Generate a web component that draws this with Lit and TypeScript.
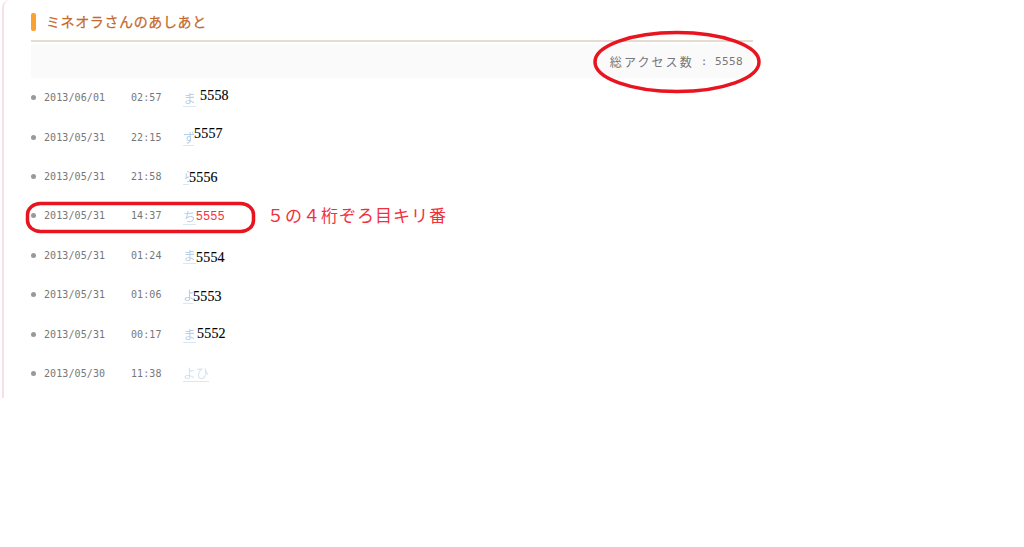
import { LitElement, html, css, svg } from "lit";
import { customElement } from "lit/decorators.js";

interface Row { date: string; time: string; kana: string; num: string; clip: number; gap: number; dy: number; hit?: boolean; faded?: boolean; }

const rows: Row[] = [
  { date: "2013/06/01", time: "02:57", kana: "ま", num: "5558", clip: 13, gap: 4, dy: -2 },
  { date: "2013/05/31", time: "22:15", kana: "ず", num: "5557", clip: 11, gap: 0, dy: -3 },
  { date: "2013/05/31", time: "21:58", kana: "ら", num: "5556", clip: 6, gap: 0, dy: 2 },
  { date: "2013/05/31", time: "14:37", kana: "ち", num: "5555", clip: 13, gap: 0, dy: 0, hit: true },
  { date: "2013/05/31", time: "01:24", kana: "ま", num: "5554", clip: 13, gap: 0, dy: 3 },
  { date: "2013/05/31", time: "01:06", kana: "よ", num: "5553", clip: 10, gap: 0, dy: 2 },
  { date: "2013/05/31", time: "00:17", kana: "ま", num: "5552", clip: 13, gap: 1, dy: 0 },
  { date: "2013/05/30", time: "11:38", kana: "よひ", num: "", clip: 26, gap: 0, dy: 0, faded: true },
];

@customElement("app-root")
export class AppRoot extends LitElement {
  static styles = css`
    :host { display: block; position: relative; height: 547px; background: #fff; overflow: hidden; }
    .panel {
      box-sizing: border-box; margin-left: 2px; width: 751px; height: 398px;
      border-left: 2px solid #f6dfe6; border-top-left-radius: 8px;
      padding: 13px 0 0 27px;
      display: flex; flex-direction: column;
    }
    .head { display: flex; align-items: center; gap: 10px; height: 18px; }
    .mark { width: 5px; height: 18px; border-radius: 2px; background: #fca02f; }
    .title {
      font: 14px/18px "Noto Sans CJK JP", sans-serif; letter-spacing: 0.62px; color: #c4692b;
      -webkit-text-stroke: 0.25px #c4692b;
      position: relative; top: -1px;
    }
    .rule { height: 2px; margin-top: 9px; background: #e6dbcf; }
    .total {
      height: 34px; margin-top: 2px; background: #fafafa;
      display: flex; align-items: center; justify-content: flex-end; padding-right: 10px;
      font: 12px "Noto Sans CJK JP", sans-serif; letter-spacing: 2.1px; color: #777;
    }
    .count { font: 11px "DejaVu Sans Mono", monospace; letter-spacing: 0.4px; white-space: pre; }
    .list { display: flex; flex-direction: column; }
    .row {
      height: 39.4px; display: flex; align-items: center;
      font: 10px "DejaVu Sans Mono", monospace; color: #777;
    }
    .dot { width: 5px; height: 5px; border-radius: 50%; background: #999; margin-right: 8px; }
    .date { width: 87px; letter-spacing: 0.1px; }
    .time { width: 52px; letter-spacing: 0.1px; }
    .who { display: flex; align-items: center; position: relative; }
    .kana {
      font: 13px/17px "Noto Sans CJK JP", sans-serif; color: #b6d1ea; white-space: nowrap;
      border-bottom: 1px solid #dbe8f4; filter: blur(0.3px);
    }
    .kana.cut { overflow: hidden; }
    .kana.faded { color: #d3e3f2; }
    .num {
      font: 14px/16px "Liberation Serif", serif; letter-spacing: 0.2px; color: #000; position: relative;
      -webkit-text-stroke: 0.15px #000;
    }
    .num.hit {
      font: 12px/16px "Liberation Sans", sans-serif; letter-spacing: 0.6px; color: #f2333c;
      -webkit-text-stroke: 0;
    }
    .note {
      font: 17px "Noto Sans CJK JP", sans-serif; letter-spacing: 1px; color: #f2303c;
      white-space: nowrap; position: absolute; left: 84px; top: -5px;
    }
    .ink { position: absolute; left: 0; top: 0; pointer-events: none; }
  `;

  render() {
    return html`
      <div class="panel">
        <div class="head"><span class="mark"></span><span class="title">ミネオラさんのあしあと</span></div>
        <div class="rule"></div>
        <div class="total">総アクセス数<span class="count"> : 5558</span></div>
        <div class="list">
          ${rows.map(r => html`
            <div class="row">
              <span class="dot"></span>
              <span class="date">${r.date}</span>
              <span class="time">${r.time}</span>
              <span class="who">
                <span class="kana ${r.faded ? "faded" : ""} ${r.clip < 13 ? "cut" : ""}" style="width:${r.clip}px">${r.kana}</span>
                ${r.num ? html`<span class="num ${r.hit ? "hit" : ""}" style="margin-left:${r.gap}px;top:${r.dy}px">${r.num}</span>` : ""}
                ${r.hit ? html`<span class="note">５の４桁ぞろ目キリ番</span>` : ""}
              </span>
            </div>`)}
        </div>
      </div>
      <svg class="ink" width="1024" height="547" fill="none" stroke="#e8141f" stroke-width="3.5">
        ${svg`<ellipse cx="677" cy="62" rx="82" ry="29.5"/>`}
        ${svg`<rect x="27.5" y="203.5" width="226" height="28" rx="13" ry="11"/>`}
      </svg>
    `;
  }
}
